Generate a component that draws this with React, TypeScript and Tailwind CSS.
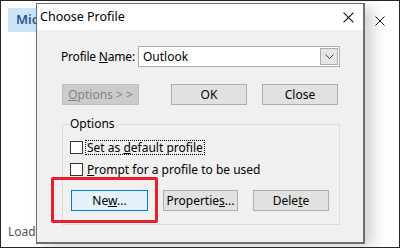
import React from 'react';

const font = { fontFamily: '"Noto Sans", "Open Sans", sans-serif' };

const CloseGlyph = ({ size = 10 }: { size?: number }) => (
  <svg width={size} height={size} viewBox="0 0 10 10" className="block">
    <path d="M0.5 0.5 L9.5 9.5 M9.5 0.5 L0.5 9.5" stroke="#111" strokeWidth="1" fill="none" />
  </svg>
);

const Checkbox = () => <div className="w-[13px] h-[13px] bg-white border border-[#333] shrink-0" />;

const Btn = ({ w, children, variant = 'normal' }: { w: string; children: React.ReactNode; variant?: 'normal' | 'disabled' | 'focus' }) => {
  const tone =
    variant === 'disabled'
      ? 'bg-[#cccccc] border-[#bfbfbf] text-[#838383]'
      : variant === 'focus'
        ? 'bg-[#e5f1fb] border-[#0078d7] text-black'
        : 'bg-[#e1e1e1] border-[#adadad] text-black';
  return (
    <div className={`${w} h-[21px] border ${tone} flex items-center justify-center text-[12px] leading-none shrink-0 whitespace-nowrap`}>
      <span>{children}</span>
    </div>
  );
};

export default function App() {
  return (
    <div className="relative w-[400px] h-[248px] bg-white border border-[#262626] overflow-hidden" style={font}>
      {/* Background app, mostly hidden by the dialog */}
      <div className="absolute left-[7px] top-[7px] w-[28px] h-[24px] bg-[#cde3f6] overflow-hidden flex items-center pl-[8px] text-[13px] font-semibold text-[#2b5797] whitespace-nowrap">
        Mic
      </div>
      <div className="absolute left-[374px] top-[15px]">
        <CloseGlyph size={10} />
      </div>
      <div className="absolute left-[7px] top-[222px] w-[28px] overflow-hidden text-[12px] text-[#555] whitespace-nowrap">Loadin</div>

      {/* Dialog */}
      <div className="absolute left-[35px] top-[2px] w-[329px] h-[241px] border border-[#6e6e6e] border-r-2 border-b-2 bg-[#f0f0f0] flex flex-col shadow-[8px_4px_14px_rgba(0,0,0,0.18)]">
        <div className="h-[26px] bg-white flex items-center justify-between pl-[3px] pr-[9px] shrink-0">
          <span className="text-[12.5px] text-black">Choose Profile</span>
          <CloseGlyph size={11} />
        </div>

        <div className="flex-1 pl-[25px] pr-[23px] pt-[16px]">
          <div className="flex items-center h-[21px]">
            <span className="w-[76px] -ml-px text-[12px] text-black whitespace-nowrap tracking-[-0.2px]">
              Profile <u>N</u>ame:
            </span>
            <div className="flex-1 h-[21px] ml-px bg-white border border-[#adadad] flex items-center justify-between pl-[4px] pr-px">
              <span className="text-[12px] text-black">Outlook</span>
              <div className="w-[18px] h-[17px] bg-[#e5e5e5] border border-[#acacac] flex items-center justify-center">
                <svg width="9" height="5" viewBox="0 0 9 5">
                  <path d="M0.5 0.5 L4.5 4.5 L8.5 0.5" stroke="#444" strokeWidth="1" fill="none" />
                </svg>
              </div>
            </div>
          </div>

          <div className="flex mt-[17px]">
            <Btn w="w-[77px]" variant="disabled">
              <u>O</u>ptions &gt; &gt;
            </Btn>
            <div className="ml-[32px]">
              <Btn w="w-[76px]">OK</Btn>
            </div>
            <div className="ml-[15px]">
              <Btn w="w-[76px]">Close</Btn>
            </div>
          </div>

          <div className="relative mt-[19px] h-[101px] border border-[#dcdcdc] pl-[7px] pt-[16px]">
            <span className="absolute -top-[9px] left-[5px] px-[2px] bg-[#f0f0f0] text-[12px] text-black leading-[16px]">Options</span>

            <div className="flex items-center h-[13px]">
              <Checkbox />
              <span className="ml-[2px] px-px border border-dotted border-black text-[12px] leading-[13px] text-black whitespace-nowrap">
                Set as <u>d</u>efault profile
              </span>
            </div>
            <div className="flex items-center h-[13px] mt-[9px]">
              <Checkbox />
              <span className="ml-[4px] text-[12px] text-black whitespace-nowrap">
                <u>P</u>rompt for a profile to be used
              </span>
            </div>

            <div className="flex mt-[14px] ml-px">
              <div className="relative">
                <Btn w="w-[77px]" variant="focus">
                  Ne<u>w</u>...
                </Btn>
                <div className="absolute -left-[20px] -top-[13px] w-[107px] h-[46px] border-[3px] border-[#e3202e] rounded-[2px]" />
              </div>
              <div className="ml-[15px]">
                <Btn w="w-[75px]">
                  Propertie<u>s</u>...
                </Btn>
              </div>
              <div className="ml-[15px]">
                <Btn w="w-[76px]">
                  Dele<u>t</u>e
                </Btn>
              </div>
            </div>
          </div>
        </div>
      </div>
    </div>
  );
}
